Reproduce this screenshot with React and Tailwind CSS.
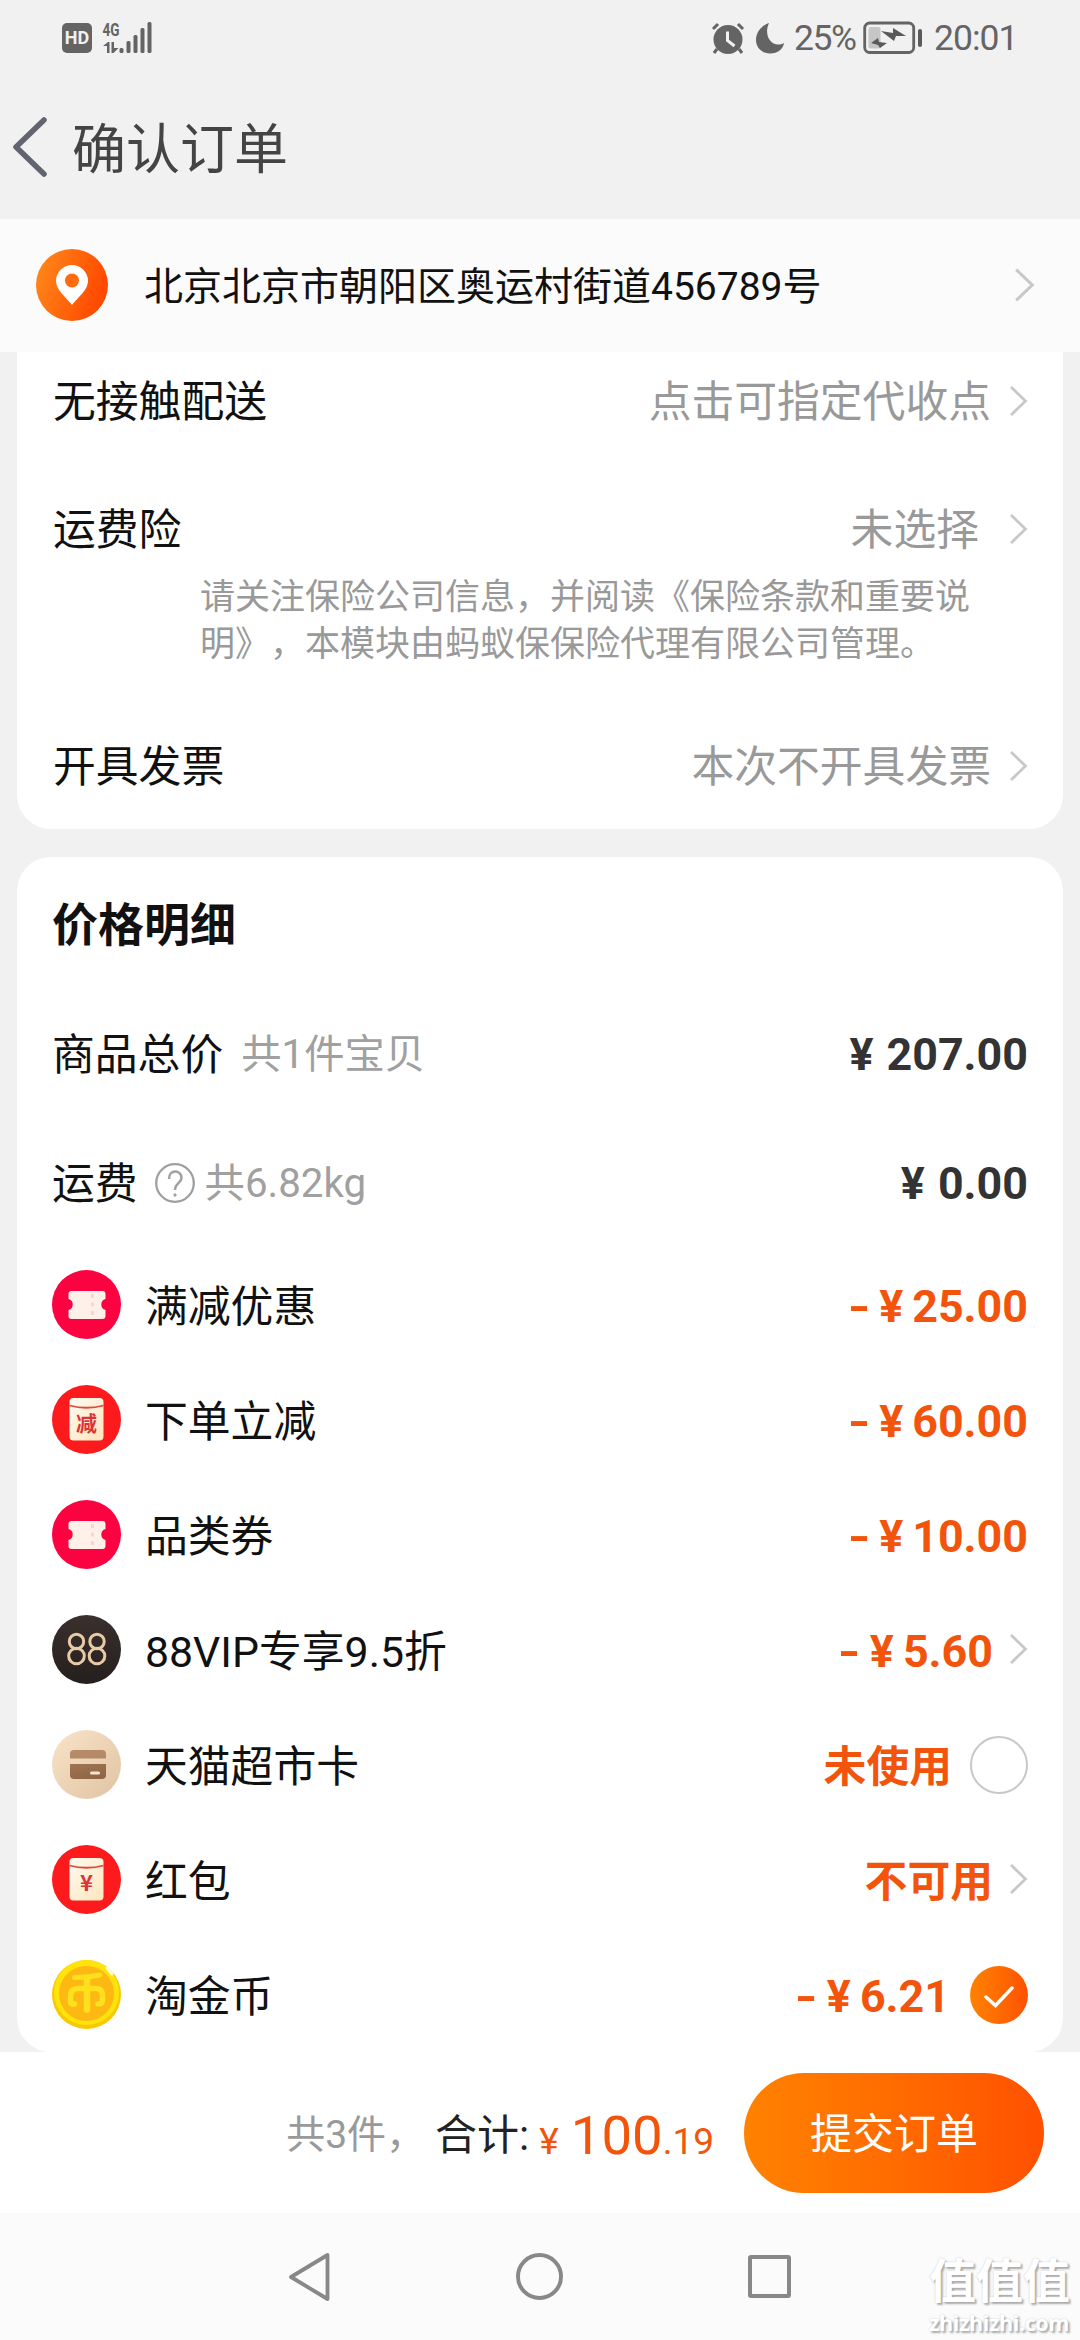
import clsx from 'clsx';

const Chevron = ({ className = 'h-[32px] w-[19px]' }) => (
  <svg viewBox="0 0 19 32" className={clsx('shrink-0 text-[#c8c8c8]', className)} fill="none">
    <path d="M2 2 L16.5 16 L2 30" stroke="currentColor" strokeWidth="2.8" />
  </svg>
);

const CouponIcon = () => (
  <svg viewBox="0 0 69 69" className="h-[69px] w-[69px]">
    <circle cx="34.5" cy="34.5" r="34.5" fill="#fb0340" />
    <path
      d="M19.5 21 H50.5 Q53.5 21 53.5 24 V29 A5.7 5.7 0 0 0 53.5 40 V46 Q53.5 49 50.5 49 H19.5 Q16.5 49 16.5 46 V40 A5.7 5.7 0 0 0 16.5 29 V24 Q16.5 21 19.5 21 Z"
      fill="#fff1ea"
    />
    <path d="M40.5 24 V48" stroke="#f9d5cd" strokeWidth="3" strokeDasharray="4 4.5" />
  </svg>
);

const PacketIcon = ({ label, size }) => (
  <svg viewBox="0 0 69 69" className="h-[69px] w-[69px]">
    <defs>
      <linearGradient id="packet" x1="0" y1="0" x2="1" y2="1">
        <stop offset="0" stopColor="#fffaf0" />
        <stop offset="1" stopColor="#fde5bd" />
      </linearGradient>
    </defs>
    <circle cx="34.5" cy="34.5" r="34.5" fill="#fd1a1c" />
    <rect x="17.5" y="13" width="34" height="42.5" rx="4" fill="url(#packet)" />
    <path d="M17.5 20.5 Q34.5 25 51.5 20.5" stroke="#e0453c" strokeWidth="1.8" fill="none" />
    <text
      x="34.5"
      y="46"
      textAnchor="middle"
      fontSize={size}
      fontWeight="700"
      fill="#dd3337"
      fontFamily="'Noto Sans CJK SC', sans-serif"
    >
      {label}
    </text>
  </svg>
);

const VipIcon = () => (
  <svg viewBox="0 0 69 69" className="h-[69px] w-[69px]">
    <defs>
      <linearGradient id="vip" x1="0" y1="0" x2="0" y2="1">
        <stop offset="0" stopColor="#3a302d" />
        <stop offset="1" stopColor="#241f1d" />
      </linearGradient>
    </defs>
    <circle cx="34.5" cy="34.5" r="34.5" fill="url(#vip)" />
    <g fill="none" stroke="#e8cba6" strokeWidth="3">
      <circle cx="24.5" cy="26.5" r="7.2" />
      <circle cx="24.5" cy="41" r="7.8" />
      <circle cx="45" cy="26.5" r="7.2" />
      <circle cx="45" cy="41" r="7.8" />
    </g>
  </svg>
);

const CardIcon = () => (
  <svg viewBox="0 0 69 69" className="h-[69px] w-[69px]">
    <defs>
      <linearGradient id="cardBg" x1="0" y1="0" x2="1" y2="1">
        <stop offset="0" stopColor="#fae3c9" />
        <stop offset="1" stopColor="#dfc4a2" />
      </linearGradient>
      <linearGradient id="cardFg" x1="0" y1="0" x2="0.5" y2="1">
        <stop offset="0" stopColor="#a07452" />
        <stop offset="1" stopColor="#906646" />
      </linearGradient>
    </defs>
    <circle cx="34.5" cy="34.5" r="34.5" fill="url(#cardBg)" />
    <path d="M18 28.5 V24 Q18 20 22 20 H50 Q54 20 54 24 V28.5 Z" fill="#b48a68" />
    <path d="M18 34 H54 V45 Q54 49 50 49 H22 Q18 49 18 45 Z" fill="url(#cardFg)" />
    <rect x="38" y="41.5" width="10" height="3" rx="1.5" fill="#fbe4cb" />
  </svg>
);

const CoinIcon = () => (
  <svg viewBox="0 0 69 69" className="h-[69px] w-[69px]">
    <circle cx="34.5" cy="34.5" r="34.5" fill="#f7c902" />
    <circle cx="34.5" cy="32.5" r="32.5" fill="#ffe30a" />
    <circle cx="34.5" cy="33.5" r="27.5" fill="#fdb813" />
    <g fill="none" stroke="#ffe01c" strokeLinecap="round" strokeLinejoin="round">
      <path d="M22.5 17.5 Q36 17.5 48 15" strokeWidth="5" />
      <path d="M35 18 V49.5" strokeWidth="6.5" />
      <path
        d="M22.5 44 H20.5 Q18.5 44 18.5 41 V36 Q18.5 28.5 26 28.5 H44 Q50.5 28.5 50.5 36 V40 Q50.5 44 46 44"
        strokeWidth="5.5"
      />
    </g>
    <path d="M55 8 L60 14" stroke="#fffbe0" strokeWidth="3" strokeLinecap="round" />
  </svg>
);

const discounts = [
  { icon: <CouponIcon />, name: '满减优惠', value: '25.00' },
  { icon: <PacketIcon label="减" size={21} />, name: '下单立减', value: '60.00' },
  { icon: <CouponIcon />, name: '品类券', value: '10.00' },
  { icon: <VipIcon />, name: '88VIP专享9.5折', value: '5.60', action: 'arrow' },
  { icon: <CardIcon />, name: '天猫超市卡', text: '未使用', action: 'empty' },
  { icon: <PacketIcon label="¥" size={22} />, name: '红包', text: '不可用', action: 'arrow' },
  { icon: <CoinIcon />, name: '淘金币', value: '6.21', action: 'checked' },
];

const StatusBar = () => (
  <div className="flex h-[76px] items-center pr-[64px] pl-[62px] text-[#646464]">
    <div className="flex h-[30px] w-[30px] items-center justify-center rounded-[5px] bg-[#646464] text-[18px] leading-none font-bold text-[#f1f1f1]">
      HD
    </div>
    <svg viewBox="0 0 54 34" className="ml-[9px] h-[34px] w-[54px] overflow-visible" fill="currentColor">
      <text x="1.5" y="15" fontSize="19" fontWeight="700" textLength="17" lengthAdjust="spacingAndGlyphs">
        4G
      </text>
      <path d="M2 25 L7 21 H8.500 V32 H6 V25 Z M10.500 21 H13 V27 H17.500 L12.500 32 H10.500 Z" />
      <rect x="18.5" y="27" width="4" height="5" rx="1.5" />
      <rect x="25.5" y="20" width="4" height="12" rx="1.5" />
      <rect x="32.5" y="14" width="4" height="18" rx="1.5" />
      <rect x="39.5" y="7" width="4" height="25" rx="1.5" />
      <rect x="46.5" y="1" width="4" height="31" rx="1.5" />
    </svg>
    <svg viewBox="0 0 34 32" className="ml-auto h-[32px] w-[34px]" fill="currentColor">
      <circle cx="17" cy="17.5" r="14.5" />
      <path d="M2 7 L7 2 M32 7 L27 2 M6 27 L3 31 M28 27 L31 31" stroke="currentColor" strokeWidth="3" />
      <path d="M16.5 9.5 V18.5 L23.5 24" stroke="#f1f1f1" strokeWidth="3" fill="none" />
    </svg>
    <svg viewBox="0 0 30 32" className="ml-[10px] h-[32px] w-[30px]" fill="currentColor">
      <path d="M14 1 C-4 7 -3 31 15 31.500 C23 31.500 28 27 29 21 C17 27 8 14 14 1 Z" />
    </svg>
    <span className="ml-[9px] w-[66px] pt-[2px] text-[35.500px] leading-none tracking-[-1.500px]">25%</span>
    <svg viewBox="0 0 62 34" className="ml-[3px] h-[34px] w-[62px]" fill="none">
      <rect x="1.7" y="2" width="49" height="29.5" rx="5" stroke="currentColor" strokeWidth="2.8" />
      <rect x="5.5" y="6" width="12" height="21.5" rx="2" fill="#c6c6c6" />
      <path d="M18 10 L30 12 V7 L43 15 L33 15 L31 20 Z M8 22 L15 17 L16 21 L24 22 L17 27 L15 24 Z" fill="#5a5a5a" />
      <rect x="55" y="8" width="4" height="18" rx="2" fill="#5a5a5a" />
    </svg>
    <span className="ml-[9px] w-[82px] pt-[2px] text-[35.500px] leading-none tracking-[-1px] whitespace-nowrap">
      20:01
    </span>
  </div>
);

const Yuan = ({ value, minus }) => (
  <span className="text-[44.800px] leading-none font-bold whitespace-nowrap">
    {minus && <span className="mr-[9px] inline-block origin-right scale-x-130">-</span>}
    <span className={minus ? 'mr-[9px]' : 'mr-[13px]'}>¥</span>
    {value}
  </span>
);

const InfoRow = ({ label, value, className, gap }) => (
  <div className={clsx('flex items-center pr-[35px] pl-[36px] text-[42.800px] leading-none', className)}>
    <span className="pt-[3px] text-[#111]">{label}</span>
    <span className={clsx('ml-auto pt-[3px] text-[#999]', gap)}>{value}</span>
    <Chevron />
  </div>
);

export default function App() {
  return (
    <div className="flex h-[2340px] w-[1080px] flex-col overflow-hidden bg-[#f1f1f1] font-[Roboto,'Noto_Sans_CJK_SC',sans-serif]">
      <StatusBar />

      <header className="flex h-[143px] items-center pb-[2px] pl-[12px] text-[#444]">
        <svg viewBox="0 0 36 62" className="h-[62px] w-[36px]" fill="none">
          <path
            d="M32 4 L4 31 L32 58"
            stroke="#62656f"
            strokeWidth="5.5"
            strokeLinecap="round"
            strokeLinejoin="round"
          />
        </svg>
        <h1 className="ml-[24px] pt-[8px] text-[54px] leading-none">确认订单</h1>
      </header>

      <section className="flex h-[133px] shrink-0 items-center bg-[#fbfbfb] pr-[45px] pb-[1px] pl-[36px]">
        <svg viewBox="0 0 72 72" className="h-[72px] w-[72px]">
          <defs>
            <linearGradient id="pin" x1="0" y1="0" x2="1" y2="0.3">
              <stop offset="0" stopColor="#ff8c1c" />
              <stop offset="1" stopColor="#ff4a00" />
            </linearGradient>
          </defs>
          <circle cx="36" cy="36" r="36" fill="url(#pin)" />
          <path d="M36 56 C30 48 20 41 20 32 A16 16 0 0 1 52 32 C52 41 42 48 36 56 Z" fill="#fff" />
          <circle cx="36" cy="31.5" r="7" fill="#ff6c10" />
        </svg>
        <span className="ml-[36px] pt-[4px] text-[39px] leading-none text-[#111]">
          北京北京市朝阳区奥运村街道456789号
        </span>
        <Chevron className="ml-auto h-[36px] w-[21px]" />
      </section>

      <section className="mx-[17px] h-[477px] shrink-0 rounded-b-[34px] bg-white">
        <InfoRow label="无接触配送" value="点击可指定代收点" className="mb-[15px] h-[97px]" gap="mr-[18px]" />
        <InfoRow label="运费险" value="未选择" className="h-[130px]" gap="mr-[30px]" />
        <p className="-mt-[19px] ml-[183px] text-[35px] leading-[46.500px] whitespace-nowrap text-[#999] [text-spacing-trim:space-all]">
          请关注保险公司信息，并阅读《保险条款和重要说
          <br />
          明》，本模块由蚂蚁保保险代理有限公司管理。
        </p>
        <InfoRow label="开具发票" value="本次不开具发票" className="mt-[33px] h-[130px]" gap="mr-[18px]" />
      </section>

      <section className="mx-[17px] mt-[28px] h-[1195px] shrink-0 rounded-[34px] bg-white pr-[35px] pl-[35px] text-[#111]">
        <h2 className="flex h-[132px] items-center pt-[3px] text-[46px] leading-none font-bold">价格明细</h2>

        <div className="flex h-[130px] items-center pt-[3px] text-[42.800px] leading-none">
          商品总价
          <span className="ml-[18px] text-[40.300px] text-[#a0a0a0]">共1件宝贝</span>
          <span className="ml-auto text-[#333]">
            <Yuan value="207.00" />
          </span>
        </div>

        <div className="flex h-[128px] items-center pt-[3px] text-[42.800px] leading-none">
          运费
          <svg
            viewBox="0 0 40 40"
            className="mb-[4px] ml-[17px] h-[40px] w-[40px] text-[#a0a0a0]"
            fill="none"
            stroke="currentColor"
          >
            <circle cx="20" cy="20" r="18.8" strokeWidth="2.300" />
            <path d="M14 16 C14 6 26.500 6.500 26.500 15 C26.500 20 20 20 20 27" strokeWidth="2.500" />
            <circle cx="20" cy="32" r="1.2" fill="currentColor" />
          </svg>
          <span className="ml-[10px] text-[40.300px] text-[#a0a0a0]">共6.82kg</span>
          <span className="ml-auto text-[#333]">
            <Yuan value="0.00" />
          </span>
        </div>

        {discounts.map((item) => (
          <div key={item.name} className="flex h-[115px] items-center">
            {item.icon}
            <span className="ml-[24px] pt-[6px] text-[42.800px] leading-none">{item.name}</span>
            <div className="ml-auto flex items-center text-[#f2540c]">
              {item.text && <span className="pt-[6px] text-[42.800px] leading-none font-bold">{item.text}</span>}
              {item.value && (
                <span className="flex pt-[6px]">
                  <Yuan value={item.value} minus />
                </span>
              )}
              {item.action === 'arrow' && <Chevron className="ml-[16px] h-[32px] w-[19px]" />}
              {item.action === 'empty' && (
                <span className="ml-[18px] h-[58px] w-[58px] rounded-full border-[2.500px] border-[#c8c8c8]" />
              )}
              {item.action === 'checked' && (
                <span className="ml-[20px] flex h-[58px] w-[58px] items-center justify-center rounded-full bg-linear-to-r from-[#ff8200] to-[#ff5000]">
                  <svg viewBox="0 0 30 24" className="mt-[4px] h-[24px] w-[30px]" fill="none">
                    <path d="M2 12 L11.500 20.500 L28 3" stroke="#fff" strokeWidth="3.5" strokeLinecap="round" />
                  </svg>
                </span>
              )}
            </div>
          </div>
        ))}
      </section>

      <footer className="flex h-[161px] shrink-0 items-center justify-end bg-white pr-[36px] leading-none">
        <span className="pt-[6px] text-[39px] text-[#999]">共3件，</span>
        <span className="ml-[10px] pt-[6px] text-[42px] text-[#222]">合计:</span>
        <span className="ml-[10px] flex items-baseline pt-[6px] text-[#f2540c]">
          <span className="mr-[12px] text-[37px]">¥</span>
          <span className="text-[54.500px]">100</span>
          <span className="text-[37px]">.19</span>
        </span>
        <button className="ml-[30px] h-[120px] w-[300px] rounded-full bg-linear-to-r from-[#ff8200] to-[#ff5000] pt-[5px] text-[42px] leading-none text-white">
          提交订单
        </button>
      </footer>

      <nav className="relative flex h-[127px] shrink-0 items-center bg-[#fbfbfb] pl-[288px] text-[#888]">
        <svg
          viewBox="0 0 44 50"
          className="h-[50px] w-[44px]"
          fill="none"
          stroke="currentColor"
          strokeWidth="3.8"
          strokeLinejoin="round"
        >
          <path d="M39.5 3 V47 L3 25 Z" />
        </svg>
        <span className="ml-[184px] h-[47px] w-[47px] rounded-full border-[4px] border-[#888]" />
        <span className="ml-[185px] h-[43px] w-[43px] rounded-[3px] border-[4px] border-[#888]" />
        <div className="absolute top-[42px] left-[929px] text-white [text-shadow:2px_2px_2px_#aaa,0_0_2px_#ccc]">
          <div className="text-[47px] leading-[54px] font-bold whitespace-nowrap">值值值</div>
          <div className="font-['Open_Sans',sans-serif] text-[21.500px] leading-[27px] font-bold tracking-[-0.400px]">
            zhizhizhi.com
          </div>
        </div>
      </nav>
    </div>
  );
}
